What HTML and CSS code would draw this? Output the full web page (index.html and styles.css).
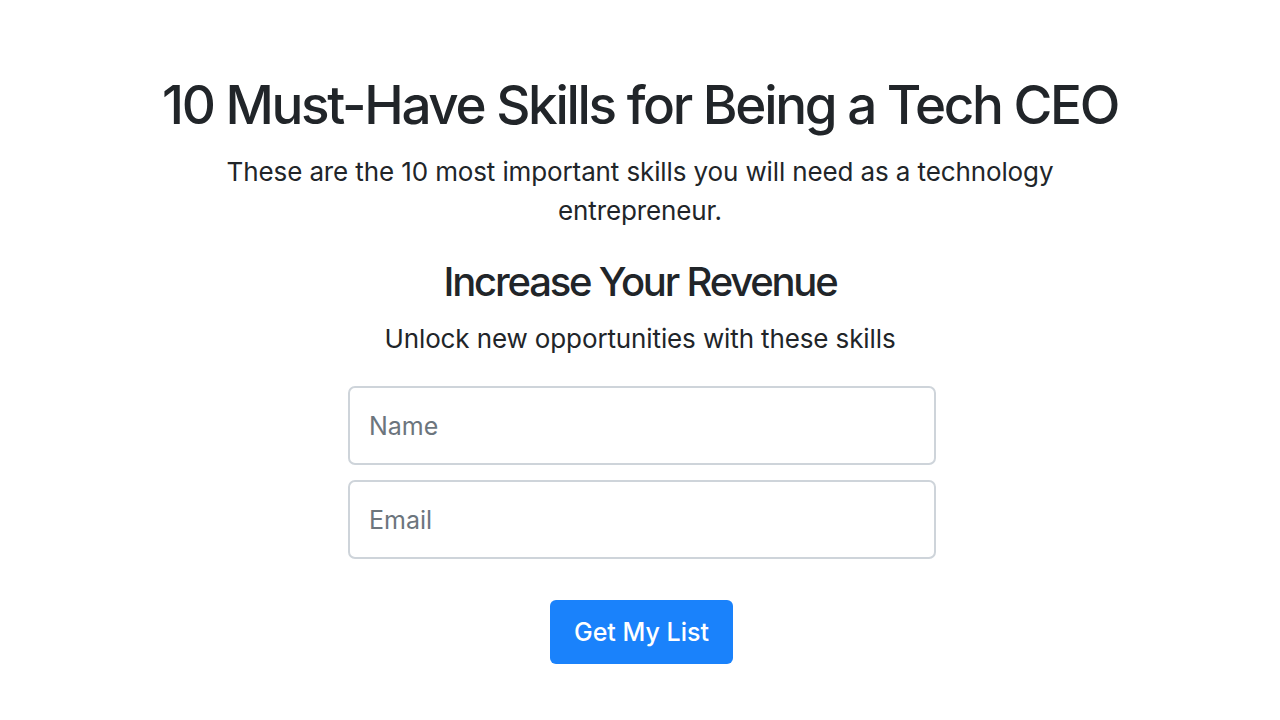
FILE: index.html
```html
<!DOCTYPE html>
<html lang="en">
<head>
<meta charset="utf-8">
<title>10 Must-Have Skills</title>
<link rel="stylesheet" href="styles.css">
</head>
<body>
<main class="page">
  <h1 class="title">10 Must-Have Skills for Being a Tech CEO</h1>
  <p class="lead">These are the 10 most important skills you will need as a technology entrepreneur.</p>
  <h2 class="subtitle">Increase Your Revenue</h2>
  <p class="tagline">Unlock new opportunities with these skills</p>
  <form class="signup">
    <input class="field" type="text" placeholder="Name">
    <input class="field" type="email" placeholder="Email">
    <button class="btn" type="button">Get My List</button>
  </form>
</main>
</body>
</html>
```

FILE: styles.css
```css
* { box-sizing: border-box; }
html, body { margin: 0; padding: 0; background: #fff; }
body {
  font-family: Inter, "Noto Sans", "Liberation Sans", sans-serif;
  color: #212529;
}
.page {
  display: flex;
  flex-direction: column;
  align-items: center;
  padding-top: 73px;
  text-align: center;
}
.title {
  margin: 0;
  font-size: 53px;
  font-weight: 500;
  line-height: 65px;
  letter-spacing: -2.3px;
}
.lead {
  margin: 14px 0 0;
  max-width: 860px;
  font-size: 26px;
  line-height: 39px;
  font-weight: 400;
  letter-spacing: -0.12px;
}
.subtitle {
  margin: 28px 0 0;
  font-size: 40px;
  font-weight: 500;
  line-height: 48px;
  letter-spacing: -2.2px;
}
.tagline {
  margin: 13px 0 0;
  font-size: 26px;
  line-height: 39px;
  letter-spacing: -0.12px;
}
.signup {
  margin: 28px 0 0 4px;
  width: 588px;
  display: flex;
  flex-direction: column;
  align-items: center;
  gap: 15px;
}
.field {
  width: 100%;
  height: 79px;
  padding: 0 19px;
  border: 2px solid #ced4da;
  border-radius: 7px;
  font-family: inherit;
  font-size: 25px;
  color: #495057;
  background: #fff;
}
.field::placeholder { color: #6c757d; opacity: 1; }
.btn {
  margin: 26px 1px 0 0;
  width: 183px;
  height: 64px;
  border: none;
  border-radius: 6px;
  background: #1a82fb;
  color: #fff;
  font-family: inherit;
  font-size: 25px;
  font-weight: 500;
}
```
